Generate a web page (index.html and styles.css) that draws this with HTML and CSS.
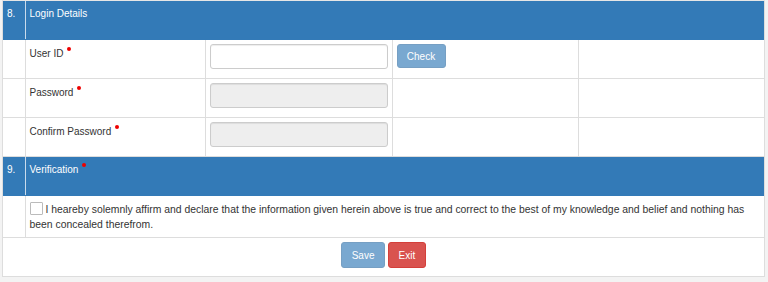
FILE: index.html
```html
<!DOCTYPE html>
<html lang="en">

<head>
    <meta charset="UTF-8">
    <meta name="viewport" content="width=device-width, initial-scale=1.0">
    <title>Login Details</title>
    <link rel="stylesheet" href="styles.css">
</head>

<body>
    <div class="panel">
        <table class="form-table">
            <colgroup>
                <col class="col-no">
                <col class="col-label">
                <col class="col-input">
                <col class="col-action">
                <col>
            </colgroup>
            <tr class="section-head">
                <td>8.</td>
                <td colspan="4">Login Details</td>
            </tr>
            <tr>
                <td></td>
                <td class="label">User ID <span class="req"></span></td>
                <td class="field"><input type="text" class="form-control"></td>
                <td class="field"><button type="button" class="btn btn-primary btn-check" disabled>Check</button></td>
                <td></td>
            </tr>
            <tr>
                <td></td>
                <td class="label">Password <span class="req"></span></td>
                <td class="field"><input type="password" class="form-control" disabled></td>
                <td></td>
                <td></td>
            </tr>
            <tr>
                <td></td>
                <td class="label">Confirm Password <span class="req"></span></td>
                <td class="field"><input type="password" class="form-control" disabled></td>
                <td></td>
                <td></td>
            </tr>
            <tr class="section-head">
                <td>9.</td>
                <td colspan="4">Verification <span class="req"></span></td>
            </tr>
            <tr>
                <td></td>
                <td colspan="4" class="declaration">
                    <span class="checkbox"></span>I heareby solemnly affirm and declare that the information given herein above is true and correct to the best of my knowledge and belief and nothing has been concealed therefrom.
                </td>
            </tr>
            <tr class="actions">
                <td colspan="5">
                    <button type="button" class="btn btn-primary btn-save" disabled>Save</button>
                    <button type="button" class="btn btn-danger btn-exit">Exit</button>
                </td>
            </tr>
        </table>
    </div>
</body>

</html>
```

FILE: styles.css
```css
body {
    margin: 0;
    background-color: #f3f3f3;
    font-family: "Liberation Sans", Arial, sans-serif;
    font-size: 10px;
    line-height: 15px;
    color: #333;
}

.panel {
    width: 761px;
    margin-left: 2px;
    border: 1px solid #ddd;
    border-top-color: #e6e6e6;
    background-color: #fff;
}

.form-table {
    width: 100%;
    border-collapse: collapse;
    table-layout: fixed;
}

.col-no {
    width: 22px;
}

.col-label {
    width: 180px;
}

.col-input {
    width: 187px;
}

.col-action {
    width: 186px;
}

.form-table td {
    border: 1px solid #ddd;
    padding: 6px 4px 4px;
    height: 28px;
    vertical-align: top;
}

.form-table tr td:first-child {
    border-left: none;
}

.form-table tr td:last-child {
    border-right: none;
}

.form-table tr:first-child td {
    border-top: none;
}

.form-table td.field {
    padding-top: 4px;
    padding-bottom: 4px;
    height: 30px;
}

.section-head td {
    background-color: #337ab7;
    color: #fff;
    height: 29px;
    padding-top: 5px;
    border-color: #337ab7;
    border-right-color: #c9dbec;
}

.req {
    display: inline-block;
    width: 4px;
    height: 4px;
    border-radius: 50%;
    background-color: #e00;
    vertical-align: 6px;
    margin-left: 1px;
}

.form-control {
    display: block;
    width: 100%;
    height: 25px;
    box-sizing: border-box;
    border: 1px solid #ccc;
    border-radius: 3px;
    box-shadow: inset 0 1px 1px rgba(0, 0, 0, .075);
    background-color: #fff;
    margin: 0;
}

.form-control:disabled {
    background-color: #eee;
}

.btn {
    font-family: "Liberation Sans", Arial, sans-serif;
    font-size: 10px;
    color: #fff;
    border: 1px solid transparent;
    border-radius: 3px;
    padding: 0 8px;
    margin: 0;
    cursor: pointer;
}

.btn-primary {
    background-color: #337ab7;
    border-color: #2e6da4;
}

.btn-primary:disabled {
    opacity: .65;
    cursor: not-allowed;
}

.btn-danger {
    background-color: #d9534f;
    border-color: #d43f3a;
}

.btn-check {
    height: 24px;
    width: 49px;
}

.form-table td.declaration {
    font-size: 10.4px;
    padding-top: 6px;
    padding-bottom: 5px;
    height: 30px;
}

.checkbox {
    display: inline-block;
    width: 11px;
    height: 11px;
    border: 1px solid #bbb;
    border-radius: 1px;
    vertical-align: -2px;
    margin-right: 3px;
    background-color: #fff;
}

.form-table .actions td {
    text-align: center;
    padding: 4px 0 8px;
    height: 26px;
    border-bottom: none;
}

.btn-save {
    width: 44px;
    height: 26px;
}

.btn-exit {
    width: 38px;
    height: 26px;
}
```
